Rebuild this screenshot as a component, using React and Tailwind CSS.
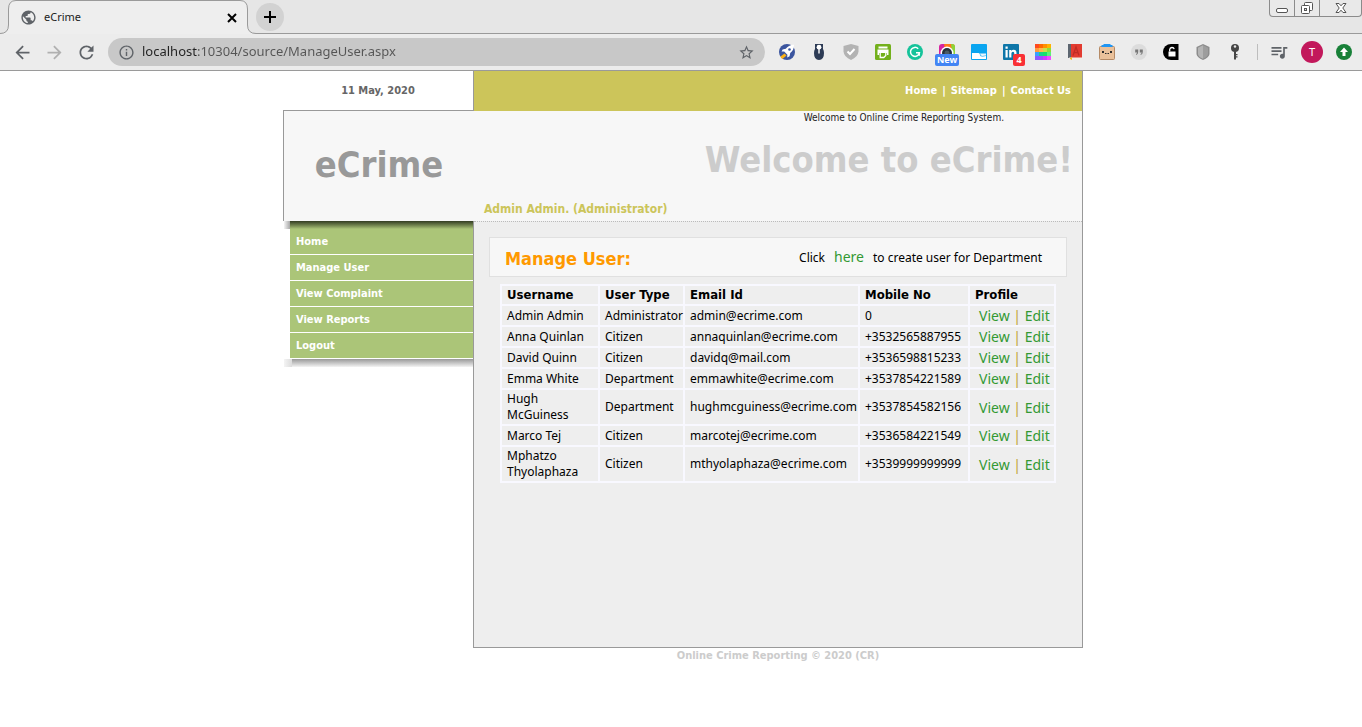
import React from "react";
import {
  MdPublic,
  MdArrowBack,
  MdArrowForward,
  MdRefresh,
  MdInfoOutline,
  MdStarBorder,
  MdQueueMusic,
} from "react-icons/md";

const navItems = ["Home", "Manage User", "View Complaint", "View Reports", "Logout"];

const users = [
  ["Admin Admin", "Administrator", "admin@ecrime.com", "0"],
  ["Anna Quinlan", "Citizen", "annaquinlan@ecrime.com", "+3532565887955"],
  ["David Quinn", "Citizen", "davidq@mail.com", "+3536598815233"],
  ["Emma White", "Department", "emmawhite@ecrime.com", "+3537854221589"],
  ["Hugh McGuiness", "Department", "hughmcguiness@ecrime.com", "+3537854582156"],
  ["Marco Tej", "Citizen", "marcotej@ecrime.com", "+3536584221549"],
  ["Mphatzo Thyolaphaza", "Citizen", "mthyolaphaza@ecrime.com", "+3539999999999"],
];

function TabEdge({ flip }) {
  return (
    <svg width="16" height="34" viewBox="0 0 16 34" className={flip ? "-scale-x-100" : ""} aria-hidden="true">
      <path d="M0 34V33.5Q8.500 33.500 8.500 25V9Q8.500 .5 16 .5V34Z" fill="#eeeeee" />
      <path d="M0 33.500Q8.500 33.500 8.500 25V9Q8.500 .5 16 .5" fill="none" stroke="#9a9a9a" />
    </svg>
  );
}

function Svg({ children }) {
  return (
    <svg width="16" height="16" viewBox="0 0 16 16" aria-hidden="true">
      {children}
    </svg>
  );
}

const rainbow = [
  ["#ff4a1f", "#ff6a00", "#ff9000", "#ffb300"],
  ["#ff9a3c", "#ffb84d", "#c8e04a", "#8fdc3a"],
  ["#3aa0ff", "#19d38a", "#17e06a", "#5af07a"],
  ["#8a5cff", "#a24bff", "#d03cff", "#f04bff"],
];

const extensions = [
  {
    name: "Rocket",
    art: (
      <Svg>
        <circle cx="8" cy="8" r="8" fill="#3b559f" />
        <path d="M1.500 12.500L5.500 9.500 7.500 11.500 3.500 15C2.500 14.500 1.800 13.500 1.500 12.500Z" fill="#fbb117" />
        <path d="M15 .8C11 .8 8.500 2.500 6.800 4.800L3.600 5.400 2.600 7.600 5.200 7.600 8.400 10.800 8.200 13.400 10.600 12.200 11.200 9C13.500 7.200 15.200 4.800 15 .8Z" fill="#fff" />
        <circle cx="10.500" cy="5.500" r="1.300" fill="#3b559f" />
      </Svg>
    ),
  },
  {
    name: "Guard",
    art: (
      <Svg>
        <path d="M4 0H12V5Q13 6.500 13 9Q13 16 8 16Q3 16 3 9Q3 6.500 4 5Z" fill="#2d3b55" />
        <circle cx="8" cy="3.200" r="2.400" fill="#fff" />
        <path d="M7.300 5H8.700V9.500H7.300Z" fill="#fff" />
      </Svg>
    ),
  },
  {
    name: "Shield check",
    art: (
      <Svg>
        <path d="M8 0L15.500 2V7.500Q15 13 8 16Q1 13 .5 7.500V2Z" fill="#b3b3b3" />
        <path d="M4.500 7.500L7 10 11.500 5" fill="none" stroke="#fff" strokeWidth="2" />
      </Svg>
    ),
  },
  {
    name: "Print",
    art: (
      <Svg>
        <rect width="16" height="16" rx="1.500" fill="#73b01c" />
        <path d="M3.500 2.500H12.500V4.500H3.500ZM2.500 5.500H13.500V11H12V9H4V11H2.500Z" fill="#fff" />
        <path d="M5.200 9V13.500H8.800L10.800 11.500V9" fill="none" stroke="#fff" strokeWidth="1.300" />
      </Svg>
    ),
  },
  {
    name: "Writing assistant",
    art: (
      <Svg>
        <circle cx="8" cy="8" r="8" fill="#15c39a" />
        <path d="M11.200 4.700A4.500 4.500 0 1 0 12.400 8.800H9M12.200 8.500V11.800" fill="none" stroke="#fff" strokeWidth="1.500" />
      </Svg>
    ),
  },
  {
    name: "Capture",
    badge: "New",
    badgeClass: "-bottom-[6px] -left-1 w-6 bg-[#4285f4]",
    art: (
      <Svg>
        <path d="M0 16V3Q0 0 3 0H8V16Z" fill="#d6249f" />
        <path d="M5 0H13Q16 0 16 3V16H8Z" fill="#ff7a1a" />
        <path d="M12 0H13Q16 0 16 3V16H14Z" fill="#8bd33a" />
        <circle cx="8" cy="9" r="6.500" fill="#fff" />
        <circle cx="8" cy="9" r="5" fill="#26323d" />
        <circle cx="8" cy="9" r="2.500" fill="#4b5a66" />
      </Svg>
    ),
  },
  {
    name: "Wave",
    art: (
      <Svg>
        <rect width="16" height="16" rx="1" fill="#0aa5f0" />
        <path d="M1 9H7.500Q9 9 9 11Q9.500 13 12 12.500L15 12V15H1Z" fill="#fff" />
        <path d="M9 9.500H15V11.500L11 12Q9.500 11.500 9 9.500Z" fill="#e7f5fd" />
      </Svg>
    ),
  },
  {
    name: "LinkedIn",
    badge: "4",
    badgeClass: "-bottom-[6px] left-[10px] w-3 bg-[#f93035]",
    art: (
      <Svg>
        <rect width="16" height="16" rx="1" fill="#0e76a8" />
        <path d="M2.500 6H4.700V13.500H2.500ZM2.500 2.500H4.700V4.700H2.500ZM6.200 6H8.300V7Q9 5.800 10.700 5.800Q13.500 5.800 13.500 9V13.500H11.300V9.500Q11.300 7.700 10 7.700Q8.400 7.700 8.400 9.500V13.500H6.200Z" fill="#fff" />
      </Svg>
    ),
  },
  {
    name: "Palette",
    art: (
      <Svg>
        {rainbow.map((row, y) =>
          row.map((c, x) => <rect key={c} x={x * 4} y={y * 4} width="4" height="4" fill={c} />)
        )}
      </Svg>
    ),
  },
  {
    name: "Dictionary",
    art: (
      <Svg>
        <path d="M1 0H4V14H1Z" fill="#5d6670" />
        <path d="M4 0H15V14H4Z" fill="#e23b30" />
        <path d="M2 13.500H15V15.500H3Z" fill="#f3ece4" />
        <path d="M3 14L5 13 5 16 3 15Z" fill="#f5b921" />
        <path d="M6 11.500L9 3 12 11.500M7 8.700H11" fill="none" stroke="#c02c24" strokeWidth="1.300" />
      </Svg>
    ),
  },
  {
    name: "Box",
    art: (
      <Svg>
        <rect x=".5" y="2.500" width="15" height="13" rx="1" fill="#eac19b" stroke="#b58a66" />
        <path d="M4.500 0H11.500V1H13.500V3H2.500V1H4.500Z" fill="#2196f3" />
        <path d="M3 7H5V9H3ZM11 7H13V9H11ZM6 9H7.500V10H6ZM8.500 9H10V10H8.500Z" fill="#2c2c2c" />
      </Svg>
    ),
  },
  {
    name: "Quote",
    art: (
      <Svg>
        <circle cx="8" cy="8" r="8" fill="#dcdcdc" />
        <path d="M4.200 5.500H7.200V8Q7.200 10.300 5 11V10Q6 9.500 6 8.500H4.200ZM8.800 5.500H11.800V8Q11.800 10.300 9.600 11V10Q10.600 9.500 10.600 8.500H8.800Z" fill="#777" />
      </Svg>
    ),
  },
  {
    name: "Unlock",
    art: (
      <Svg>
        <path d="M8 0H15.500V16H8A8 8 0 0 1 8 0Z" fill="#000" />
        <path d="M5.500 7.500H12.500V12.500H5.500Z" fill="#fff" />
        <path d="M6.700 7.500V5.500A2.300 2.300 0 0 1 11.200 5.200" fill="none" stroke="#fff" strokeWidth="1.300" />
      </Svg>
    ),
  },
  {
    name: "Shield",
    art: (
      <Svg>
        <path d="M8 0L14.500 3V10Q14 13.500 8 16Q2 13.500 1.500 10V3Z" fill="#8c8c8c" />
        <path d="M8 1.200L3 3.800V10Q3 12.500 8 14.800Z" fill="#b4b4b4" />
        <path d="M8 1.200L13 3.800V10Q13 12.500 8 14.800Z" fill="#9d9d9d" />
      </Svg>
    ),
  },
  {
    name: "Key",
    art: (
      <Svg>
        <circle cx="8" cy="4" r="4" fill="#454545" />
        <circle cx="8" cy="2.500" r="1.200" fill="#e8e8e8" />
        <path d="M7 7.500H9V15L8 16 7 15Z" fill="#454545" />
        <path d="M9 10H10.500V11.200H9ZM9 12.200H10.500V13.500H9Z" fill="#454545" />
      </Svg>
    ),
  },
];

function Browser() {
  return (
    <header className="font-['Noto_Sans',sans-serif] text-[#5f6368]">
      <div className="relative flex h-[34px] items-stretch bg-[#e6e6e6] shadow-[inset_0_-1px_0_#9a9a9a]">
        <TabEdge />
        <div className="flex w-56 items-center border-t border-[#9a9a9a] bg-[#eeeeee] pl-1">
          <MdPublic size={17} />
          <span className="ml-[7px] flex-1 text-[11px] text-[#222]">eCrime</span>
          <button type="button" aria-label="Close tab" className="text-black">
            <Svg>
              <path d="M4 4L12 12M12 4L4 12" fill="none" stroke="currentColor" strokeWidth="2" />
            </Svg>
          </button>
        </div>
        <TabEdge flip />
        <button
          type="button"
          aria-label="New tab"
          className="mt-[3px] flex size-7 items-center justify-center rounded-full bg-[#d2d2d2] text-black"
        >
          <Svg>
            <path d="M8 2V14M2 8H14" fill="none" stroke="currentColor" strokeWidth="2" />
          </Svg>
        </button>
        <div className="ml-auto flex h-[17px] w-[93px] divide-x divide-[#8b8b8b] overflow-hidden rounded-b border border-t-0 border-[#8b8b8b] bg-[#e9e9e9]">
          <button type="button" aria-label="Minimize" className="flex w-[25px] items-center justify-center">
            <svg width="13" height="16" viewBox="0 0 13 16">
              <rect x=".5" y="8.500" width="11" height="4" rx="1.500" fill="#fff" stroke="#555" />
            </svg>
          </button>
          <button type="button" aria-label="Restore" className="flex w-[25px] items-center justify-center">
            <svg width="14" height="16" viewBox="0 0 14 16">
              <rect x="4.500" y="2.500" width="8" height="8" rx="1" fill="#fff" stroke="#555" />
              <rect x="1.500" y="5.500" width="8" height="8" rx="1" fill="#fff" stroke="#555" />
              <rect x="4.500" y="8.500" width="2" height="2" fill="#e9e9e9" stroke="#555" />
            </svg>
          </button>
          <button type="button" aria-label="Close" className="flex flex-1 items-center justify-center">
            <svg width="12" height="16" viewBox="0 0 12 16">
              <path
                d="M1 3.500H4L6 5.800 8 3.500H11L7.800 8 11 12.500H8L6 10.200 4 12.500H1L4.200 8Z"
                fill="#fff"
                stroke="#555"
              />
            </svg>
          </button>
        </div>
      </div>

      <div className="flex h-[37px] items-center border-b border-[#9a9a9a] bg-[#ececec] pr-[2px] pl-[6px]">
        <button type="button" aria-label="Back" className="flex w-8 justify-center">
          <MdArrowBack size={21} />
        </button>
        <button type="button" aria-label="Forward" className="flex w-8 justify-center text-[#b0b0b0]">
          <MdArrowForward size={21} />
        </button>
        <button type="button" aria-label="Reload" className="flex w-8 justify-center">
          <MdRefresh size={21} />
        </button>
        <div className="mx-[6px] flex h-7 flex-1 items-center rounded-full bg-[#c8c8c8] px-[10px]">
          <MdInfoOutline size={17} />
          <input
            aria-label="Address"
            defaultValue="localhost:10304/source/ManageUser.aspx"
            className="ml-[7px] min-w-0 flex-1 bg-[linear-gradient(to_right,#222_55px,#555_55px)] bg-clip-text text-[13px] text-transparent outline-none"
          />
          <button type="button" aria-label="Bookmark">
            <MdStarBorder size={17} />
          </button>
        </div>
        {extensions.map((e) => (
          <button key={e.name} type="button" aria-label={e.name} className="flex w-8 justify-center">
            <span className="relative">
              {e.art}
              {e.badge && (
                <span
                  className={`absolute h-3 rounded-xs text-center text-[9px] leading-3 font-bold text-white ${e.badgeClass}`}
                >
                  {e.badge}
                </span>
              )}
            </span>
          </button>
        ))}
        <span className="mr-[5px] ml-[6px] h-4 w-px bg-[#bdbdbd]" />
        <button type="button" aria-label="Media" className="flex w-8 justify-center">
          <MdQueueMusic size={20} />
        </button>
        <button
          type="button"
          aria-label="Profile"
          className="mr-[5px] ml-[6px] flex size-[22px] items-center justify-center rounded-full bg-[#c2185b] text-[11px] text-white"
        >
          T
        </button>
        <button type="button" aria-label="Update" className="flex w-8 justify-center">
          <Svg>
            <circle cx="8" cy="8" r="8" fill="#188038" />
            <path d="M8 3.500L12 8H9.500V12H6.500V8H4Z" fill="#fff" />
          </Svg>
        </button>
      </div>
    </header>
  );
}

function Sidebar() {
  return (
    <nav className="w-[190px] text-[11px] font-bold text-white">
      <div className="flex h-2">
        <span className="ml-px w-[6px] bg-linear-to-r from-[#f4f4f4] to-[#a8a8a8]" />
        <span className="flex-1 bg-linear-to-b from-[#333d22] to-[#abc578]" />
      </div>
      <ul className="ml-[7px]">
        {navItems.map((item) => (
          <li key={item} className="border-b border-white bg-[#abc578]">
            <a href="#" className="block pl-[6px] leading-[25px]">
              {item}
            </a>
          </li>
        ))}
      </ul>
      <div className="ml-px flex h-2">
        <span className="w-2 bg-linear-to-r from-[#f4f4f4] to-[#dcdcdc]" />
        <span className="flex-1 bg-linear-to-b from-[#999999] to-[#f4f4f4]" />
      </div>
    </nav>
  );
}

function UserTable() {
  const cell = "border-2 border-[#f8f8ff] py-px pl-[5px] leading-4";
  return (
    <table className="mx-auto mt-[7px] w-[556px] table-fixed border-collapse text-left font-['Noto_Sans',sans-serif] text-xs text-black">
      <colgroup>
        <col className="w-[98px]" />
        <col className="w-[85px]" />
        <col className="w-[175px]" />
        <col className="w-[110px]" />
        <col />
      </colgroup>
      <thead className="font-['DejaVu_Sans_Condensed','DejaVu_Sans',sans-serif] text-[13px]">
        <tr>
          {["Username", "User Type", "Email Id", "Mobile No", "Profile"].map((h) => (
            <th key={h} scope="col" className={cell}>
              {h}
            </th>
          ))}
        </tr>
      </thead>
      <tbody>
        {users.map(([name, type, email, mobile]) => (
          <tr key={email}>
            <td className={`${cell} pr-2`}>{name}</td>
            <td className={cell}>{type}</td>
            <td className={cell}>{email}</td>
            <td className={cell}>{mobile}</td>
            <td className="border-2 border-[#f8f8ff] py-px pl-[9px] text-sm leading-[17px] text-[#339933]">
              <a href="#">View</a> <span className="text-[#c0a030]">|</span> <a href="#">Edit</a>
            </td>
          </tr>
        ))}
      </tbody>
    </table>
  );
}

export default function App() {
  return (
    <div className="min-h-screen bg-white">
      <Browser />
      <div className="mx-auto w-full max-w-[804px] pl-1 font-['DejaVu_Sans_Condensed','DejaVu_Sans',sans-serif]">
        <div className="flex h-10 items-stretch">
          <p className="flex w-[190px] items-center justify-center border-b border-[#999999] pt-[2px] text-[11px] font-bold text-[#666666]">
            11 May, 2020
          </p>
          <div className="flex flex-1 items-center justify-end gap-[5px] border-x border-[#999999] bg-[#ccc55a] pr-[11px] text-[11px] font-bold text-white">
            <a href="#">Home</a>
            <span>|</span>
            <a href="#">Sitemap</a>
            <span>|</span>
            <a href="#">Contact Us</a>
          </div>
        </div>

        <div className="flex h-[110px] border-x border-[#999999] bg-[#f7f7f7]">
          <div className="flex w-[190px] items-center justify-center pb-[2px] text-4xl font-bold text-[#999999]">
            eCrime
          </div>
          <div className="flex flex-1 flex-col">
            <p className="mr-[78px] text-right text-[10px] leading-[14px] text-[#222]">
              Welcome to Online Crime Reporting System.
            </p>
            <h1 className="mt-[15px] pr-[9px] text-right text-4xl font-bold text-[#cccccc]">Welcome to eCrime!</h1>
            <p className="mt-[21px] pl-[10px] text-xs leading-4 font-bold text-[#ccc55a]">Admin Admin. (Administrator)</p>
          </div>
        </div>

        <div className="flex items-start">
          <Sidebar />
          <main className="min-h-[427px] flex-1 border-x border-b border-[#999999] bg-[#eeeeee]">
            <div className="border-t border-dotted border-[#bbbbbb] px-[15px] pt-[15px]">
              <section className="flex h-10 items-center justify-between border border-[#e0e0e0] bg-[#f7f7f7] pr-6 pl-[15px]">
                <h2 className="pt-1 text-lg font-bold text-[#ff9900]">Manage User:</h2>
                <p className="font-['Noto_Sans',sans-serif] text-xs text-black">
                  Click
                  <a href="#" className="mx-[9px] text-sm text-[#339933]">
                    here
                  </a>
                  to create user for Department
                </p>
              </section>
              <UserTable />
            </div>
          </main>
        </div>
        <footer className="mt-px ml-[190px] text-center text-[11px] leading-[14px] font-bold text-[#cccccc]">
          Online Crime Reporting © 2020 (CR)
        </footer>
      </div>
    </div>
  );
}
